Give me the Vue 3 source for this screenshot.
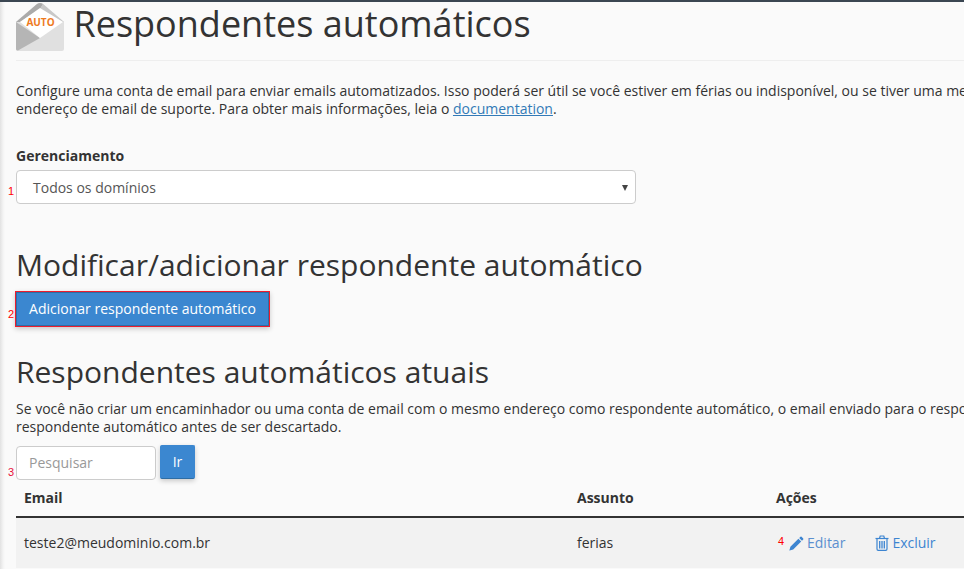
<script setup>
const row = { email: 'teste2@meudominio.com.br', subject: 'ferias' }
</script>

<template>
  <div class="page">
    <header class="head">
      <svg class="logo" width="48" height="48" viewBox="0 0 48 48">
        <path d="M0 19 L21 1 Q24 -1 27 1 L48 19 V46 Q48 48 46 48 H2 Q0 48 0 46 Z" fill="#e0e0e0"/>
        <path d="M0 19 L24 35 L2 47.500 Q0 47.500 0 46 Z" fill="#b5b5b5"/>
        <path d="M0 19 L21 1 Q24 -1 27 1 L24 6 L4 19 Z" fill="#aaa"/>
        <path d="M27 1 L48 19 L47 19 L24 6 Z" fill="#c8c8c8"/>
        <path d="M24 5 L47 19 L24 35 L4 19 Z" fill="#fff"/>
        <text x="24.500" y="22.500" class="auto" text-anchor="middle">AUTO</text>
      </svg>
      <h1>Respondentes automáticos</h1>
    </header>

    <p class="intro">Configure uma conta de email para enviar emails automatizados. Isso poderá ser útil se você estiver em férias ou indisponível, ou se tiver uma mensagem genérica<br>endereço de email de suporte. Para obter mais informações, leia o <a href="#">documentation</a>.</p>

    <section class="manage">
      <label class="lbl">Gerenciamento</label>
      <div class="mark-wrap">
        <span class="mark m1">1</span>
        <div class="select">
          <span>Todos os domínios</span>
          <i class="caret"></i>
        </div>
      </div>
    </section>

    <h2 class="h-mod">Modificar/adicionar respondente automático</h2>
    <div class="mark-wrap">
      <span class="mark m2">2</span>
      <button class="btn add">Adicionar respondente automático</button>
    </div>

    <h2 class="h-cur">Respondentes automáticos atuais</h2>
    <p class="note">Se você não criar um encaminhador ou uma conta de email com o mesmo endereço como respondente automático, o email enviado para o respondente automático será processado pelo<br>respondente automático antes de ser descartado.</p>

    <div class="mark-wrap search">
      <span class="mark m3">3</span>
      <div class="input">Pesquisar</div>
      <button class="btn go">Ir</button>
    </div>

    <div class="table">
      <div class="tr th">
        <div class="c1">Email</div>
        <div class="c2">Assunto</div>
        <div class="c3">Ações</div>
      </div>
      <div class="tr td">
        <div class="c1">{{ row.email }}</div>
        <div class="c2">{{ row.subject }}</div>
        <div class="c3 actions">
          <span class="mark m4">4</span>
          <a href="#" class="act edit">
            <svg width="15" height="15" viewBox="0 0 15 15"><path d="M11.500 .7 Q12 .3 12.600 .8 L14.200 2.400 Q14.700 3 14.200 3.500 L13 4.800 L10.200 2 Z M9.400 2.800 L12.200 5.600 L4.200 13.600 L.6 14.600 Q.3 14.600 .4 14.200 L1.400 10.800 Z" fill="#3d85d1"/></svg>
            Editar
          </a>
          <a href="#" class="act del">
            <svg width="14" height="16" viewBox="0 0 14 16" fill="none" stroke="#3d85d1"><path d="M.5 3.500 H13.500" stroke-width="1.200"/><path d="M4.500 3.500 L5.200 1 H8.800 L9.500 3.500" stroke-width="1.200"/><path d="M2 3.500 V14 Q2 15.300 3.200 15.300 H10.800 Q12 15.300 12 14 V3.500" stroke-width="1.200"/><path d="M4.700 6 V13.500 M7 6 V13.500 M9.300 6 V13.500" stroke-width="1.300"/></svg>
            Excluir
          </a>
        </div>
      </div>
    </div>
  </div>
</template>

<style>
html, body { margin: 0; overflow: hidden; }
</style>

<style scoped>
.page {
  box-sizing: border-box;
  width: 964px;
  height: 569px;
  overflow: hidden;
  padding: 1px 0 0 16px;
  background: linear-gradient(90deg, #e2e2e2 0, #f3f3f3 3px, #fafafa 5px);
  border-top: 2px solid #3b4652;
  font-family: "Open Sans", sans-serif;
  font-size: 14px;
  line-height: 18px;
  color: #333;
  white-space: nowrap;
}
.head {
  display: flex;
  align-items: flex-start;
  gap: 9.500px;
  height: 57px;
  border-bottom: 1px solid #eee;
}
.logo { flex: none; }
.auto { font: 700 10px "Open Sans", sans-serif; fill: #ee7a1e; }
h1 {
  margin: -1px 0 0;
  font-size: 36px;
  font-weight: 400;
  line-height: 44px;
  color: #333;
}
.intro { margin: 21px 0 0; }
.intro a { color: #337ab7; }
.manage { margin-top: 28px; }
.lbl { display: block; font-weight: 700; height: 24px; line-height: 20px; }
.mark-wrap { position: relative; }
.mark { position: absolute; font: 11px "Liberation Sans", sans-serif; color: #f00; line-height: 12px; }
.m1 { left: -8px; top: 15px; }
.m2 { left: -8px; top: 17px; }
.m3 { left: -8px; top: 21px; color: #e8103c; }
.m4 { left: 2px; top: 1px; }
.select {
  box-sizing: border-box;
  width: 620px;
  height: 34px;
  display: flex;
  align-items: center;
  justify-content: space-between;
  padding: 1px 7px 0 16px;
  background: #fff;
  border: 1px solid #ccc;
  border-radius: 4px;
  color: #555;
}
.caret { width: 0; height: 0; border: 3.500px solid transparent; border-top: 6px solid #444; border-bottom: 0; }
h2 {
  margin: 0;
  font-size: 30px;
  font-weight: 400;
  line-height: 36px;
  color: #333;
}
.h-mod { margin-top: 43px; }
.btn {
  font: inherit;
  color: #fff;
  background: #3b87d0;
  border: 1px solid #2e6da4;
  border-radius: 0;
  padding: 0;
  box-shadow: 0 2px 5px rgba(0,0,0,.2);
  display: block;
}
.add {
  margin: 8px 0 0 -1px;
  width: 255px;
  height: 36px;
  border-color: #ed1c2e;
  box-shadow: inset 0 0 0 1px #2e6da4, 0 2px 5px rgba(0,0,0,.2);
}
.h-cur { margin-top: 27px; }
.note { margin: 10px 0 0; }
.search { display: flex; gap: 4px; align-items: flex-start; margin-top: 9px; }
.input {
  box-sizing: border-box;
  width: 140px;
  height: 34px;
  margin-top: 1px;
  padding: 7px 12px;
  background: #fff;
  border: 1px solid #ccc;
  border-radius: 4px;
  color: #999;
}
.go { width: 35px; height: 34px; border-radius: 2px; border-color: #3b87d0; border-bottom-color: #2e6da4; }
.table { width: 948px; }
.tr { display: flex; align-items: center; padding-left: 8px; }
.th { height: 36px; font-weight: 700; border-bottom: 2px solid #333; }
.td { height: 50px; background: #f2f2f2; }
.c1 { width: 553px; }
.c2 { width: 199px; }
.c3 { position: relative; }
.actions { display: flex; gap: 30px; padding-left: 13px; }
.act { display: flex; align-items: center; gap: 3px; color: #3d85d1; text-decoration: none; }
.edit { color: #5b8fcf; }
</style>
